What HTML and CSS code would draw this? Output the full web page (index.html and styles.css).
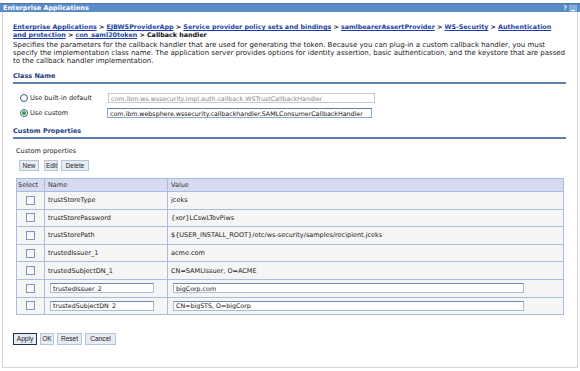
FILE: index.html
```html
<!DOCTYPE html>
<html>
<head>
<meta charset="utf-8">
<link rel="stylesheet" href="styles.css">
</head>
<body>
<div class="titlebar">
  <span class="title">Enterprise Applications</span>
  <span class="tools"><span class="help">?</span><span class="min"></span></span>
</div>
<div class="panel">
  <div class="crumbs">
    <a href="#">Enterprise Applications</a> &gt; <a href="#">EJBWSProviderApp</a> &gt; <a href="#">Service provider policy sets and bindings</a> &gt; <a href="#">samlbearerAssertProvider</a> &gt; <a href="#">WS-Security</a> &gt; <a href="#">Authentication</a><br><a href="#">and protection</a> &gt; <a href="#">con_saml20token</a> &gt; <span class="cur">Callback handler</span>
  </div>
  <p class="desc">Specifies the parameters for the callback handler that are used for generating the token. Because you can plug-in a custom callback handler, you must<br>specify the implementation class name. The application server provides options for identity assertion, basic authentication, and the keystore that are passed<br>to the callback handler implementation.</p>

  <div class="section">Class Name</div>
  <div class="choices">
    <div class="choice">
      <label class="rlabel"><input type="radio" name="cls" class="radio"> Use built-in default</label>
      <input type="text" class="field field-dis" value="com.ibm.ws.wssecurity.impl.auth.callback.WSTrustCallbackHandler" disabled>
    </div>
    <div class="choice">
      <label class="rlabel"><input type="radio" name="cls" class="radio" checked> Use custom</label>
      <input type="text" class="field field-cust" value="com.ibm.websphere.wssecurity.callbackhandler.SAMLConsumerCallbackHandler">
    </div>
  </div>

  <div class="section section-cp">Custom Properties</div>
  <div class="cp-label">Custom properties</div>
  <div class="btns">
    <button class="btn w-new">New</button><button class="btn w-edit">Edit</button><button class="btn w-del">Delete</button>
  </div>
  <table class="grid">
    <thead>
      <tr><th class="c-sel">Select</th><th class="c-name">Name</th><th>Value</th></tr>
    </thead>
    <tbody>
      <tr><td class="c-sel"><input type="checkbox" class="chk"></td><td>trustStoreType</td><td>jceks</td></tr>
      <tr><td class="c-sel"><input type="checkbox" class="chk"></td><td>trustStorePassword</td><td>{xor}LCswLTovPiws</td></tr>
      <tr><td class="c-sel"><input type="checkbox" class="chk"></td><td>trustStorePath</td><td>${USER_INSTALL_ROOT}/etc/ws-security/samples/recipient.jceks</td></tr>
      <tr><td class="c-sel"><input type="checkbox" class="chk"></td><td>trustedIssuer_1</td><td>acme.com</td></tr>
      <tr><td class="c-sel"><input type="checkbox" class="chk"></td><td>trustedSubjectDN_1</td><td>CN=SAMLIssuer, O=ACME</td></tr>
      <tr><td class="c-sel"><input type="checkbox" class="chk"></td><td><input type="text" class="cell-in name-in" value="trustedIssuer_2"></td><td><input type="text" class="cell-in val-in" value="bigCorp.com"></td></tr>
      <tr><td class="c-sel"><input type="checkbox" class="chk"></td><td><input type="text" class="cell-in name-in" value="trustedSubjectDN_2"></td><td><input type="text" class="cell-in val-in" value="CN=bigSTS, O=bigCorp"></td></tr>
    </tbody>
  </table>
  <div class="actions">
    <button class="btn btn-act btn-def w-apply">Apply</button><button class="btn btn-act w-ok">OK</button><button class="btn btn-act w-reset">Reset</button><button class="btn btn-act w-cancel">Cancel</button>
  </div>
</div>
</body>
</html>
```
FILE: styles.css
```css
* { box-sizing: border-box; }
body {
  margin: 0;
  background: #fff;
  font-family: "DejaVu Sans", Verdana, sans-serif;
  font-size: 6.5px;
  color: #222;
}
.titlebar {
  margin-top: 3px;
  height: 9px;
  background: #5a8cc8;
  border-top: 1px solid #4a78b4;
  display: flex;
  align-items: center;
  justify-content: space-between;
  padding: 0 3px 0 3px;
  color: #fff;
  font-weight: bold;
  line-height: 8px;
}
.tools { display: flex; align-items: center; gap: 2px; }
.help { color: #e8f0fa; font-size: 6px; }
.min {
  width: 8px; height: 7px;
  background: #86acdc;
  position: relative;
}
.min::after {
  content: "";
  position: absolute;
  left: 2px; right: 2px; bottom: 1px;
  height: 1px;
  background: #fff;
}
.panel {
  margin: 0 2px;
  height: 356px;
  border: 1px solid #d4d4d4;
  border-top: none;
  padding: 11px 11px 0 10px;
}
.crumbs {
  font-weight: bold;
  font-size: 6.35px;
  line-height: 8px;
  color: #111;
  white-space: nowrap;
}
.crumbs a { color: #1b3fa8; text-decoration: underline; }
.desc {
  margin: 2px -10px 0 0;
  font-size: 7px;
  line-height: 8px;
  color: #222;
  white-space: nowrap;
}
.section {
  margin-top: 7px;
  font-weight: bold;
  color: #21407a;
  line-height: 8px;
  padding-bottom: 2px;
  border-bottom: 2px solid #5d7fb0;
}
.choices {
  margin-top: 9px;
  display: flex;
  flex-direction: column;
  gap: 5px;
}
.choice {
  display: flex;
  align-items: center;
  height: 10px;
}
.rlabel {
  width: 95px;
  display: flex;
  align-items: center;
  gap: 2px;
  padding-left: 7px;
  color: #222;
}
.radio {
  appearance: none;
  -webkit-appearance: none;
  margin: 0;
  width: 8px; height: 8px;
  border: 1px solid #3b5d8f;
  border-radius: 50%;
  background: #fff;
  display: inline-grid;
  place-content: center;
}
.radio:checked::after {
  content: "";
  width: 4px; height: 4px;
  border-radius: 50%;
  background: #2ea02e;
}
.field {
  height: 10px;
  font-family: inherit;
  font-size: 6.3px;
  padding: 0 2px;
  margin: 0;
  background: #fff;
  line-height: 8px;
}
.field-dis {
  width: 267px;
  border: 1px solid #c8c8c8;
  color: #888;
}
.field-cust {
  margin-left: -1px;
  width: 265px;
  border: 1px solid #8aa6c8;
  border-top-color: #5d7fa8;
  color: #111;
}
.section-cp { margin-top: 9px; }
.cp-label {
  margin-top: 8px;
  padding-left: 3px;
  line-height: 8px;
}
.btns {
  margin-top: 5px;
  padding-left: 6px;
  display: flex;
  gap: 5px;
}
.btns .w-edit { margin-right: -2px; }
.btn {
  font-family: "Liberation Sans", Arial, sans-serif;
  font-size: 6.4px;
  height: 11px;
  line-height: 9px;
  padding: 0 1px;
  margin: 0;
  background: #e6ebf4;
  border: 1px solid #b4c4dc;
  color: #222;
  text-align: center;
}
.w-new { width: 20px; }
.w-edit { width: 14px; }
.w-del { width: 28px; }
.w-apply { width: 24px; }
.w-ok { width: 14px; }
.w-reset { width: 25px; }
.w-cancel { width: 31px; }
.grid {
  margin: 7px 0 0 3px;
  width: 548px;
  border-collapse: collapse;
  border: 1px solid #a9bde0;
}
.grid th, .grid td {
  border: 1px solid #a9bde0;
  text-align: left;
  font-weight: normal;
  padding: 0 3px;
  white-space: nowrap;
}
.grid th {
  background: #d6dbf1;
  height: 13px;
  color: #333;
}
.grid td {
  background: #f5f5f5;
  height: 17.6px;
  color: #222;
}
.grid .c-sel { width: 28px; padding: 0 1px; }
.grid td.c-sel { text-align: center; }
.grid .c-name { width: 123px; }
.chk {
  appearance: none;
  -webkit-appearance: none;
  margin: 0;
  width: 9px; height: 9px;
  border: 1px solid #7a97bf;
  background: linear-gradient(#eef2f7, #fff);
  vertical-align: middle;
}
.cell-in {
  height: 10px;
  margin: 0 0 0 2px;
  font-family: inherit;
  font-size: 6.3px;
  padding: 0 2px;
  background: #fff;
  border: 1px solid #a7bcd6;
  border-top-color: #6d8db6;
  color: #111;
  vertical-align: middle;
}
.name-in { width: 104px; }
.val-in { width: 351px; }
.actions {
  margin-top: 18px;
  display: flex;
  gap: 3px;
}
.btn-act { height: 12px; line-height: 10px; font-size: 6.6px; }
.btn-def {
  border: 1px solid #1e2f4e;
}
```
